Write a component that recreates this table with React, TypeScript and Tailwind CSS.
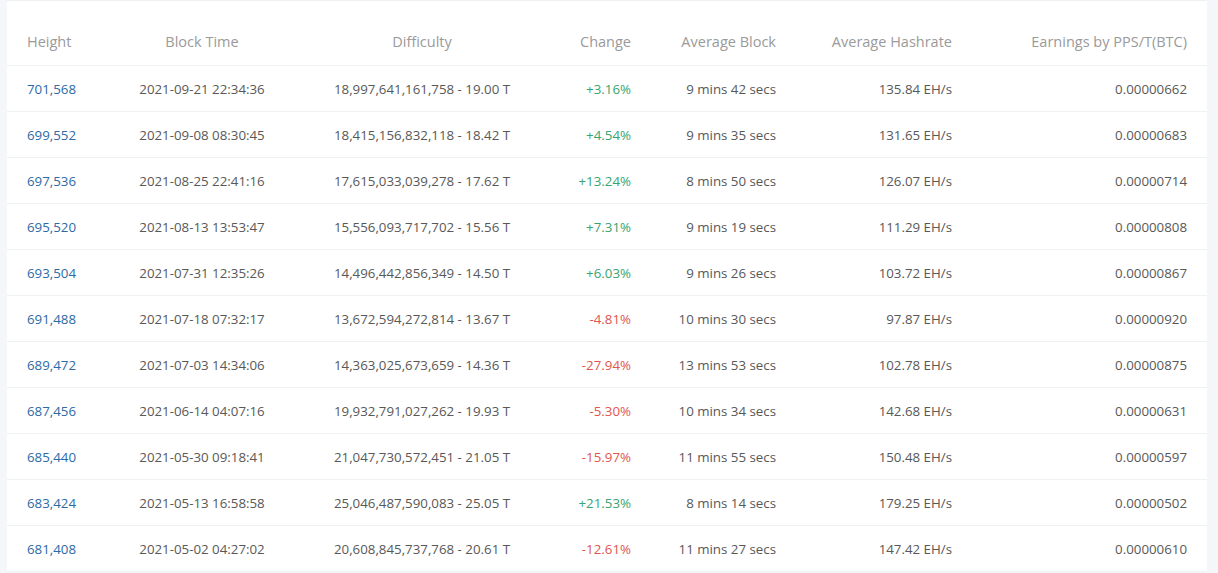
import React from "react";

type Row = [string, string, string, string, string, string, string];

const rows: Row[] = [
  ["701,568", "2021-09-21 22:34:36", "18,997,641,161,758 - 19.00 T", "+3.16%", "9 mins 42 secs", "135.84 EH/s", "0.00000662"],
  ["699,552", "2021-09-08 08:30:45", "18,415,156,832,118 - 18.42 T", "+4.54%", "9 mins 35 secs", "131.65 EH/s", "0.00000683"],
  ["697,536", "2021-08-25 22:41:16", "17,615,033,039,278 - 17.62 T", "+13.24%", "8 mins 50 secs", "126.07 EH/s", "0.00000714"],
  ["695,520", "2021-08-13 13:53:47", "15,556,093,717,702 - 15.56 T", "+7.31%", "9 mins 19 secs", "111.29 EH/s", "0.00000808"],
  ["693,504", "2021-07-31 12:35:26", "14,496,442,856,349 - 14.50 T", "+6.03%", "9 mins 26 secs", "103.72 EH/s", "0.00000867"],
  ["691,488", "2021-07-18 07:32:17", "13,672,594,272,814 - 13.67 T", "-4.81%", "10 mins 30 secs", "97.87 EH/s", "0.00000920"],
  ["689,472", "2021-07-03 14:34:06", "14,363,025,673,659 - 14.36 T", "-27.94%", "13 mins 53 secs", "102.78 EH/s", "0.00000875"],
  ["687,456", "2021-06-14 04:07:16", "19,932,791,027,262 - 19.93 T", "-5.30%", "10 mins 34 secs", "142.68 EH/s", "0.00000631"],
  ["685,440", "2021-05-30 09:18:41", "21,047,730,572,451 - 21.05 T", "-15.97%", "11 mins 55 secs", "150.48 EH/s", "0.00000597"],
  ["683,424", "2021-05-13 16:58:58", "25,046,487,590,083 - 25.05 T", "+21.53%", "8 mins 14 secs", "179.25 EH/s", "0.00000502"],
  ["681,408", "2021-05-02 04:27:02", "20,608,845,737,768 - 20.61 T", "-12.61%", "11 mins 27 secs", "147.42 EH/s", "0.00000610"],
];

const grid = "grid grid-cols-[100px_150px_290px_64px_145px_176px_235px] px-[20px] items-center";

export default function App() {
  return (
    <div className="w-[1218px] h-[573px] bg-[#f4f6f9] overflow-hidden" style={{ fontFamily: '"Open Sans", "Noto Sans", sans-serif' }}>
      <div className="ml-[7px] w-[1200px] bg-white border-t border-[#eef0f3]">
        <div className={`${grid} h-[65px] pt-[17px] border-b border-[#f0f1f3] text-[14.5px] text-[#9a9a9a]`}>
          <div className="text-left">Height</div>
          <div className="text-center">Block Time</div>
          <div className="text-center">Difficulty</div>
          <div className="text-right">Change</div>
          <div className="text-right">Average Block</div>
          <div className="text-right">Average Hashrate</div>
          <div className="text-right">Earnings by PPS/T(BTC)</div>
        </div>
        {rows.map((r) => (
          <div key={r[0]} className={`${grid} h-[46px] pt-[2px] border-b border-[#f0f1f3] text-[13.3px] text-[#585858]`}>
            <div className="text-left text-[#2d6aa5]">{r[0]}</div>
            <div className="text-center">{r[1]}</div>
            <div className="text-center">{r[2]}</div>
            <div className={`text-right ${r[3].startsWith("+") ? "text-[#38a46f]" : "text-[#e05550]"}`}>{r[3]}</div>
            <div className="text-right">{r[4]}</div>
            <div className="text-right">{r[5]}</div>
            <div className="text-right">{r[6]}</div>
          </div>
        ))}
      </div>
    </div>
  );
}
